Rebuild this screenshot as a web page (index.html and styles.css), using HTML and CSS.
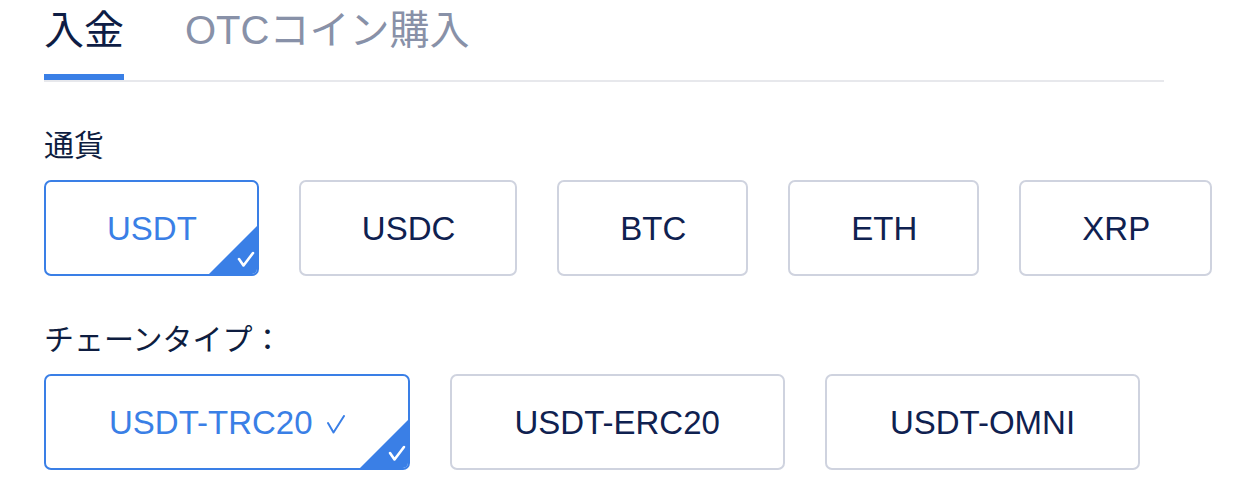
FILE: index.html
```html
<!DOCTYPE html>
<html lang="ja">
<head>
<meta charset="utf-8">
<title>入金</title>
<link rel="stylesheet" href="styles.css">
</head>
<body>
<div class="page">
  <div class="tabs">
    <div class="tab active">入金</div>
    <div class="tab">OTCコイン購入</div>
  </div>

  <div class="label">通貨</div>
  <div class="options row1">
    <div class="opt selected">USDT
      <svg class="corner" viewBox="0 0 48 48" width="48" height="48"><polygon points="48,0 48,48 0,48" fill="#3a7fe6"/><polyline points="30,33 34.5,39.5 44,27" fill="none" stroke="#fff" stroke-width="2.6" stroke-linecap="round" stroke-linejoin="round"/></svg>
    </div>
    <div class="opt">USDC</div>
    <div class="opt">BTC</div>
    <div class="opt">ETH</div>
    <div class="opt">XRP</div>
  </div>

  <div class="label">チェーンタイプ：</div>
  <div class="options row2">
    <div class="opt selected">USDT-TRC20<svg class="inline-check" viewBox="0 0 18 19" width="18" height="19"><polyline points="1,8 6.5,17.5 17,1" fill="none" stroke="#3a7fe6" stroke-width="2" stroke-linecap="round" stroke-linejoin="round"/></svg>
      <svg class="corner" viewBox="0 0 48 48" width="48" height="48"><polygon points="48,0 48,48 0,48" fill="#3a7fe6"/><polyline points="30,33 34.5,39.5 44,27" fill="none" stroke="#fff" stroke-width="2.6" stroke-linecap="round" stroke-linejoin="round"/></svg>
    </div>
    <div class="opt">USDT-ERC20</div>
    <div class="opt">USDT-OMNI</div>
  </div>
</div>
</body>
</html>
```

FILE: styles.css
```css
html, body {
  margin: 0;
  padding: 0;
  background: #ffffff;
}

body {
  font-family: "Liberation Sans", "Noto Sans CJK JP", sans-serif;
  color: #0f1f4a;
}

.page {
  padding-left: 44px;
}

.tabs {
  display: flex;
  gap: 61px;
  width: 1120px;
  border-bottom: 2px solid #e7e8ec;
}

.tab {
  font-size: 40px;
  line-height: 56px;
  padding-top: 2px;
  padding-bottom: 16px;
  border-bottom: 6px solid transparent;
  color: #8891a8;
}

.tab.active {
  color: #0e1d45;
  border-bottom-color: #3a7fe6;
}

.label {
  font-size: 30px;
  line-height: 40px;
  margin: 44px 0 14px;
  color: #0e1d40;
}

.options {
  display: flex;
  gap: 40px;
}

.opt {
  position: relative;
  overflow: hidden;
  box-sizing: border-box;
  height: 96px;
  padding: 2px 61px 0;
  border: 2px solid #cfd3df;
  border-radius: 7px;
  display: flex;
  align-items: center;
  justify-content: center;
  font-size: 33px;
  color: #0f2150;
  white-space: nowrap;
}

.row1 .opt {
  padding-right: 60px;
}

.row2 .opt {
  padding-left: 63px;
  padding-right: 63px;
}

.opt.selected {
  border-color: #3a7fe6;
  color: #3a7fe6;
}

.inline-check {
  margin-left: 14px;
  margin-top: 2px;
}

.corner {
  position: absolute;
  right: 0;
  bottom: 0;
  display: block;
}
```
